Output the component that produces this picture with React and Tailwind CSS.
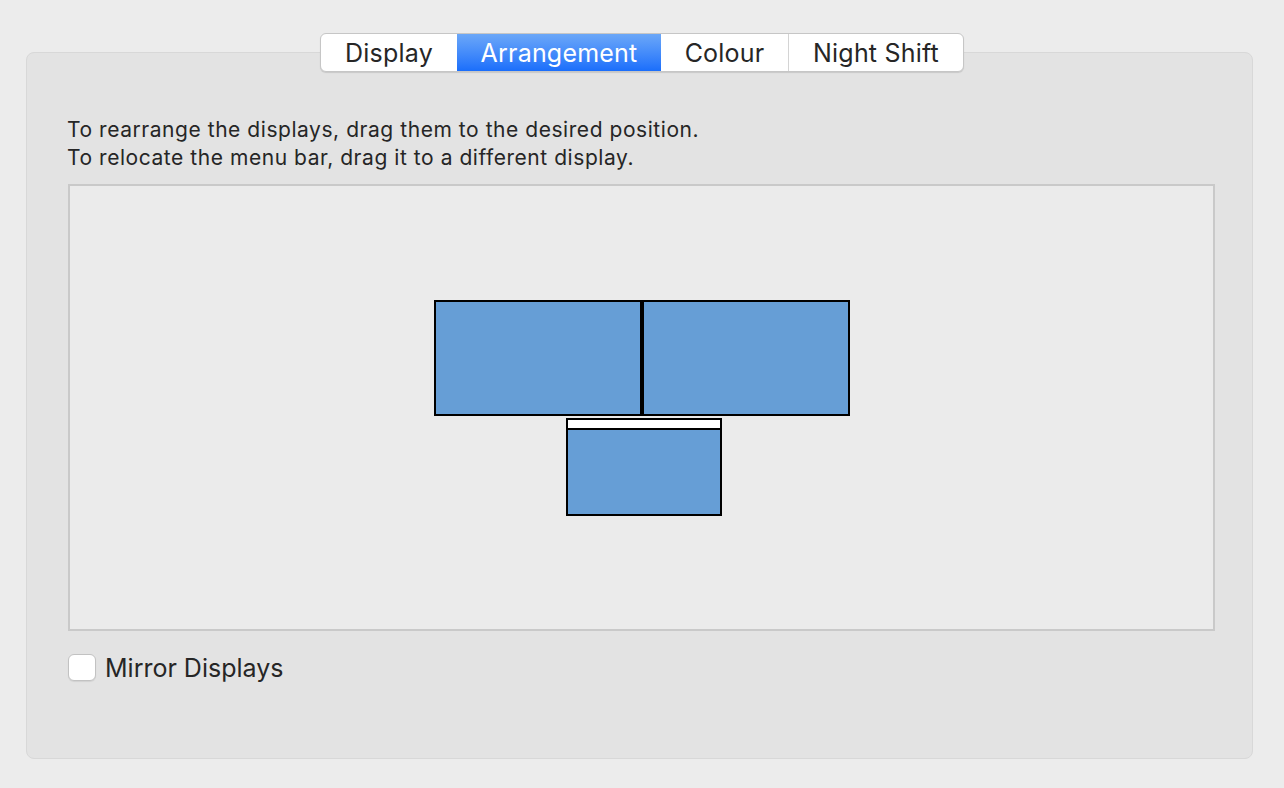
import React, { useState } from "react";

const tabs = [
  { label: "Display", w: "w-[136px]" },
  { label: "Arrangement", w: "w-[204px]" },
  { label: "Colour", w: "w-[127px]" },
  { label: "Night Shift", w: "w-[175px]" },
];

function Screen({ className = "", menuBar = false }) {
  return (
    <div className={`border-2 border-black bg-[#669ed6] flex flex-col ${className}`}>
      {menuBar && <div className="h-[10px] bg-white border-b-2 border-black" />}
    </div>
  );
}

export default function App() {
  const [active, setActive] = useState(1);
  const [mirror, setMirror] = useState(false);

  return (
    <div
      className="w-full h-[788px] bg-[#ececec] pt-[33px] px-[26px] text-[#262626]"
      style={{ fontFamily: "Inter, 'Noto Sans', sans-serif" }}
    >
      <div className="relative z-10 flex justify-center">
        <div className="flex h-[39px] rounded-[6px] border border-[#c6c6c6] bg-white shadow-[0_1px_1px_rgba(0,0,0,0.12)] overflow-hidden">
          {tabs.map((t, i) => (
            <button
              key={t.label}
              onClick={() => setActive(i)}
              className={`${t.w} flex items-center justify-center pt-[2px] text-[25px] tracking-[0.2px] leading-none ${
                i === active
                  ? "bg-gradient-to-b from-[#6ba7f8] to-[#1a6efb] text-white"
                  : "text-[#262626]"
              } ${i > 0 && i !== active && i - 1 !== active ? "border-l border-[#d4d4d4]" : ""}`}
            >
              {t.label}
            </button>
          ))}
        </div>
      </div>

      <div className="-mt-[20px] h-[707px] w-[1227px] rounded-[8px] border border-[#d8d8d8] bg-[#e3e3e3] pt-[63px] pl-[41px]">
        <p className="text-[21px] tracking-[0.55px] leading-[28px] -ml-[1px]">
          To rearrange the displays, drag them to the desired position.
        </p>
        <p className="text-[21px] tracking-[0.55px] leading-[28px] -ml-[1px]">
          To relocate the menu bar, drag it to a different display.
        </p>

        <div className="mt-[12px] w-[1147px] h-[447px] border-2 border-[#c9c9c9] bg-[#ebebeb] flex items-center justify-center">
          <div className="flex flex-col items-center">
            <div className="flex">
              <Screen className="w-[208px] h-[116px]" />
              <Screen className="w-[208px] h-[116px]" />
            </div>
            <Screen menuBar className="mt-[2px] ml-[4px] w-[156px] h-[98px]" />
          </div>
        </div>

        <label className="mt-[23px] flex items-center gap-[9px] cursor-pointer">
          <span
            onClick={() => setMirror((m) => !m)}
            className="w-[28px] h-[27px] rounded-[6px] border border-[#c2c2c2] bg-white shadow-[0_1px_1px_rgba(0,0,0,0.08)] flex items-center justify-center text-[#1a6efb] text-[18px]"
          >
            {mirror ? "✓" : ""}
          </span>
          <span className="text-[25px] leading-none pt-[2px]">Mirror Displays</span>
        </label>
      </div>
    </div>
  );
}
